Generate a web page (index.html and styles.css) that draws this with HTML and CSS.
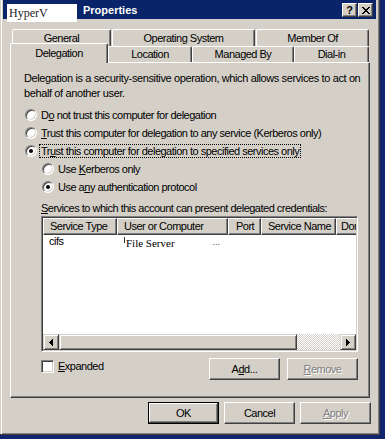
FILE: index.html
```html
<!DOCTYPE html>
<html lang="en">
<head>
    <meta charset="UTF-8">
    <meta name="viewport" content="width=device-width, initial-scale=1.0">
    <title>HyperV Properties</title>
    <link rel="stylesheet" href="styles.css">
</head>
<body>
    <div class="window">
        <div class="titlebar">
            <span class="redact">HyperV</span>
            <span class="title">Properties</span>
            <div class="caption-buttons">
                <span class="cap-btn help">?</span>
                <span class="cap-btn close">
                    <svg width="8" height="7" viewBox="0 0 8 7" shape-rendering="crispEdges">
                        <path d="M0 0h2v1H0z M6 0h2v1H6z M1 1h2v1H1z M5 1h2v1H5z M2 2h4v1H2z M3 3h2v1H3z M2 4h4v1H2z M1 5h2v1H1z M5 5h2v1H5z M0 6h2v1H0z M6 6h2v1H6z" fill="#000"/>
                    </svg>
                </span>
            </div>
        </div>

        <div class="dialog">
            <!-- two rows of tabs, Delegation is the open one -->
            <div class="tab-row back">
                <div class="tab tab-general">General</div>
                <div class="tab tab-os">Operating System</div>
                <div class="tab tab-member">Member Of</div>
            </div>
            <div class="tab-row front">
                <div class="tab tab-delegation selected">Delegation</div>
                <div class="tab tab-location">Location</div>
                <div class="tab tab-managed">Managed By</div>
                <div class="tab tab-dialin">Dial-in</div>
            </div>

            <div class="panel">
                <p class="intro">Delegation is a security-sensitive operation, which allows services to act on<br>behalf of another user.</p>

                <div class="options">
                    <div class="radio-row"><span class="radio"></span><span>D<u>o</u> not trust this computer for delegation</span></div>
                    <div class="radio-row"><span class="radio"></span><span><u>T</u>rust this computer for delegation to any service (Kerberos only)</span></div>
                    <div class="radio-row"><span class="radio checked"></span><span class="focus">Tr<u>u</u>st this computer for delegation to specified services only</span></div>
                    <div class="sub-options">
                        <div class="radio-row"><span class="radio"></span><span>Use <u>K</u>erberos only</span></div>
                        <div class="radio-row"><span class="radio checked"></span><span>Use a<u>n</u>y authentication protocol</span></div>
                    </div>
                </div>

                <div class="services">
                    <div class="services-label"><u>S</u>ervices to which this account can present delegated credentials:</div>
                    <div class="listbox">
                        <div class="list-header">
                            <div class="col col-type">Service Type</div>
                            <div class="col col-user">User or Computer</div>
                            <div class="col col-port">Port</div>
                            <div class="col col-name">Service Name</div>
                            <div class="col col-domain">Domain</div>
                        </div>
                        <div class="list-body">
                            <div class="list-row">
                                <div class="cell col-type">cifs</div>
                                <div class="cell col-user">
                                    <span class="mark"></span>
                                    <span class="server">File Server</span>
                                    <span class="dots">...</span>
                                </div>
                            </div>
                        </div>
                        <div class="hscroll">
                            <span class="sb-btn">
                                <svg width="4" height="7" viewBox="0 0 4 7" shape-rendering="crispEdges"><path d="M0 3h1v1H0z M1 2h1v3H1z M2 1h1v5H2z M3 0h1v7H3z" fill="#000"/></svg>
                            </span>
                            <span class="sb-thumb"></span>
                            <span class="sb-track"></span>
                            <span class="sb-btn">
                                <svg width="4" height="7" viewBox="0 0 4 7" shape-rendering="crispEdges"><path d="M3 3h1v1H3z M2 2h1v3H2z M1 1h1v5H1z M0 0h1v7H0z" fill="#000"/></svg>
                            </span>
                        </div>
                    </div>
                    <div class="list-footer">
                        <div class="check-row"><span class="checkbox"></span><span><u>E</u>xpanded</span></div>
                        <button class="btn btn-add">A<u>d</u>d...</button>
                        <button class="btn btn-remove" disabled><u>R</u>emove</button>
                    </div>
                </div>
            </div>

            <div class="dialog-buttons">
                <button class="btn default">OK</button>
                <button class="btn">Cancel</button>
                <button class="btn" disabled><u>A</u>pply</button>
            </div>
        </div>
    </div>
</body>
</html>
```

FILE: styles.css
```css
/* Classic grey dialog on a dark blue desktop */
body {
    margin: 0;
    background-color: #10256e;
    font-family: "Liberation Sans", Arial, sans-serif;
    font-size: 11px;
    letter-spacing: -0.5px;
    color: #000;
}

.window {
    width: 380px;
    height: 435px;
    box-sizing: border-box;
    padding: 0 3px;
    background-color: #d4d0c8;
    border-right: 1px solid #404040;
    border-bottom: 1px solid #404040;
    box-shadow: inset 1px 0 #d4d0c8, inset 2px 0 #fff, inset -1px -1px #808080;
}

/* Title bar */
.titlebar {
    display: flex;
    align-items: flex-start;
    height: 19px;
    background-color: #0a246a;
}

.redact {
    flex: none;
    width: 68px;
    height: 18px;
    margin: 4px 0 -3px 4px;
    padding-left: 2px;
    background-color: #fff;
    font-family: "Liberation Serif", "Times New Roman", serif;
    font-size: 12px;
    letter-spacing: 0;
    line-height: 18px;
    color: #222;
    position: relative;
    z-index: 2;
}

.title {
    margin-left: 6px;
    padding-top: 2px;
    font-weight: bold;
    letter-spacing: 0;
    line-height: 17px;
    color: #fff;
}

.caption-buttons {
    display: flex;
    gap: 1px;
    margin: 3px 3px 0 auto;
}

.cap-btn {
    display: flex;
    align-items: center;
    justify-content: center;
    width: 15px;
    height: 14px;
    box-sizing: border-box;
    background-color: #d4d0c8;
    border: 1px solid;
    border-color: #fff #404040 #404040 #fff;
    box-shadow: inset -1px -1px #808080;
    font-weight: bold;
    font-size: 11px;
    letter-spacing: 0;
    line-height: 12px;
}

/* Tabs */
.dialog {
    padding: 10px 0 0 7px;
}

.tab-row {
    display: flex;
}

.tab-row.back {
    height: 17px;
    padding-left: 2px;
    gap: 1px;
}

.tab-row.front {
    height: 16px;
    align-items: flex-end;
}

.tab {
    box-sizing: border-box;
    height: 100%;
    border-top: 1px solid #fff;
    border-left: 1px solid #fff;
    border-right: 1px solid #404040;
    border-radius: 2px 2px 0 0;
    box-shadow: inset -1px 0 #808080;
    text-align: center;
    line-height: 15px;
    white-space: nowrap;
}

.tab-row.back .tab {
    line-height: 16px;
}

.tab-general { width: 99px; }
.tab-os { width: 143px; }
.tab-member { width: 113px; }
.tab-delegation { width: 98px; }
.tab-location { width: 84px; }
.tab-managed { width: 102px; }
.tab-dialin { width: 75px; }

.tab.selected {
    height: 20px;
    margin-bottom: -1px;
    line-height: 18px;
    background-color: #d4d0c8;
    position: relative;
    z-index: 1;
}

/* Tab page */
.panel {
    width: 360px;
    height: 336px;
    box-sizing: border-box;
    padding: 8px 11px 0 13px;
    border: 1px solid;
    border-color: #fff #404040 #404040 #fff;
    box-shadow: inset -1px -1px #808080;
}

.intro {
    margin: 0;
    line-height: 15px;
    letter-spacing: -0.38px;
    white-space: nowrap;
}

.options {
    margin-top: 5px;
}

.radio-row {
    display: flex;
    align-items: center;
    height: 18px;
    margin-left: 1px;
    white-space: nowrap;
}

.sub-options {
    padding-left: 18px;
}

.sub-options .radio-row {
    margin-left: 0;
}

.radio {
    flex: none;
    display: flex;
    align-items: center;
    justify-content: center;
    width: 12px;
    height: 12px;
    box-sizing: border-box;
    margin-right: 4px;
    border-radius: 50%;
    background-color: #fff;
    border: 1px solid;
    border-color: #808080 #fff #fff #808080;
    box-shadow: inset 1px 1px #404040, inset -1px -1px #d4d0c8;
}

.radio.checked::after {
    content: "";
    width: 4px;
    height: 4px;
    border-radius: 50%;
    background-color: #000;
}

.focus {
    outline: 1px dotted #000;
    padding: 0 1px;
    margin-left: -1px;
    line-height: 12px;
}

/* Services list */
.services {
    width: 317px;
    margin-left: 17px;
}

.services-label {
    margin-top: 5px;
    line-height: 15px;
    white-space: nowrap;
}

.listbox {
    display: flex;
    flex-direction: column;
    height: 136px;
    box-sizing: border-box;
    border: 1px solid;
    border-color: #808080 #fff #fff #808080;
    box-shadow: inset 1px 1px #404040, inset -1px -1px #d4d0c8;
    padding: 1px;
    background-color: #fff;
    overflow: hidden;
}

.list-header {
    display: flex;
    height: 17px;
    background-color: #d4d0c8;
    overflow: hidden;
}

.col {
    flex: none;
    box-sizing: border-box;
    height: 17px;
    padding-left: 6px;
    border: 1px solid;
    border-color: #fff #404040 #404040 #fff;
    box-shadow: inset -1px -1px #808080;
    line-height: 15px;
    white-space: nowrap;
    overflow: hidden;
}

.col-type { width: 74px; }
.col-user { width: 111px; }
.col-port { width: 33px; padding-left: 7px; }
.col-name { width: 75px; }
.col-domain { width: 30px; padding-left: 4px; }

.list-body {
    flex: 1;
}

.list-row {
    display: flex;
    height: 13px;
    line-height: 13px;
}

.cell {
    flex: none;
    box-sizing: border-box;
    padding-left: 6px;
    border: none;
    box-shadow: none;
}

.list-row .col-user {
    display: flex;
    align-items: flex-start;
    padding-left: 7px;
}

.mark {
    width: 1px;
    height: 6px;
    margin-top: 2px;
    background-color: #333;
}

.server {
    margin-left: 1px;
    padding-top: 2px;
    font-family: "Liberation Serif", "Times New Roman", serif;
    font-size: 11px;
    letter-spacing: 0;
}

.dots {
    margin-left: auto;
    margin-right: 8px;
    padding-top: 1px;
    font-size: 9px;
    letter-spacing: 0;
    color: #444;
}

.hscroll {
    display: flex;
    height: 16px;
}

.sb-btn,
.sb-thumb {
    flex: none;
    display: flex;
    align-items: center;
    justify-content: center;
    box-sizing: border-box;
    height: 16px;
    background-color: #d4d0c8;
    border: 1px solid;
    border-color: #d4d0c8 #404040 #404040 #d4d0c8;
    box-shadow: inset 1px 1px #fff, inset -1px -1px #808080;
}

.sb-btn {
    width: 16px;
}

.sb-thumb {
    width: 238px;
}

.sb-track {
    flex: 1;
    background: repeating-conic-gradient(#fff 0 25%, #d4d0c8 0 50%) 0 0 / 2px 2px;
}

.list-footer {
    display: flex;
    align-items: flex-start;
    margin-top: 6px;
}

.check-row {
    display: flex;
    align-items: center;
    margin-top: 2px;
    line-height: 13px;
}

.checkbox {
    width: 13px;
    height: 13px;
    box-sizing: border-box;
    margin-right: 4px;
    background-color: #fff;
    border: 1px solid;
    border-color: #808080 #fff #fff #808080;
    box-shadow: inset 1px 1px #404040, inset -1px -1px #d4d0c8;
}

/* Push buttons */
.btn {
    width: 71px;
    height: 22px;
    padding: 0;
    background-color: #d4d0c8;
    border: 1px solid;
    border-color: #fff #404040 #404040 #fff;
    box-shadow: inset -1px -1px #808080;
    font-family: inherit;
    font-size: 11px;
    letter-spacing: -0.5px;
    color: #000;
}

.btn:disabled {
    color: #808080;
    text-shadow: 1px 1px #fff;
}

.btn.default {
    border-color: #000;
    box-shadow: inset -1px -1px #404040, inset 1px 1px #fff, inset -2px -2px #808080;
}

.btn-add {
    margin-left: auto;
}

.btn-remove {
    margin-left: 7px;
}

.dialog-buttons {
    display: flex;
    justify-content: flex-end;
    gap: 5px;
    width: 361px;
    margin-top: 4px;
}
```
